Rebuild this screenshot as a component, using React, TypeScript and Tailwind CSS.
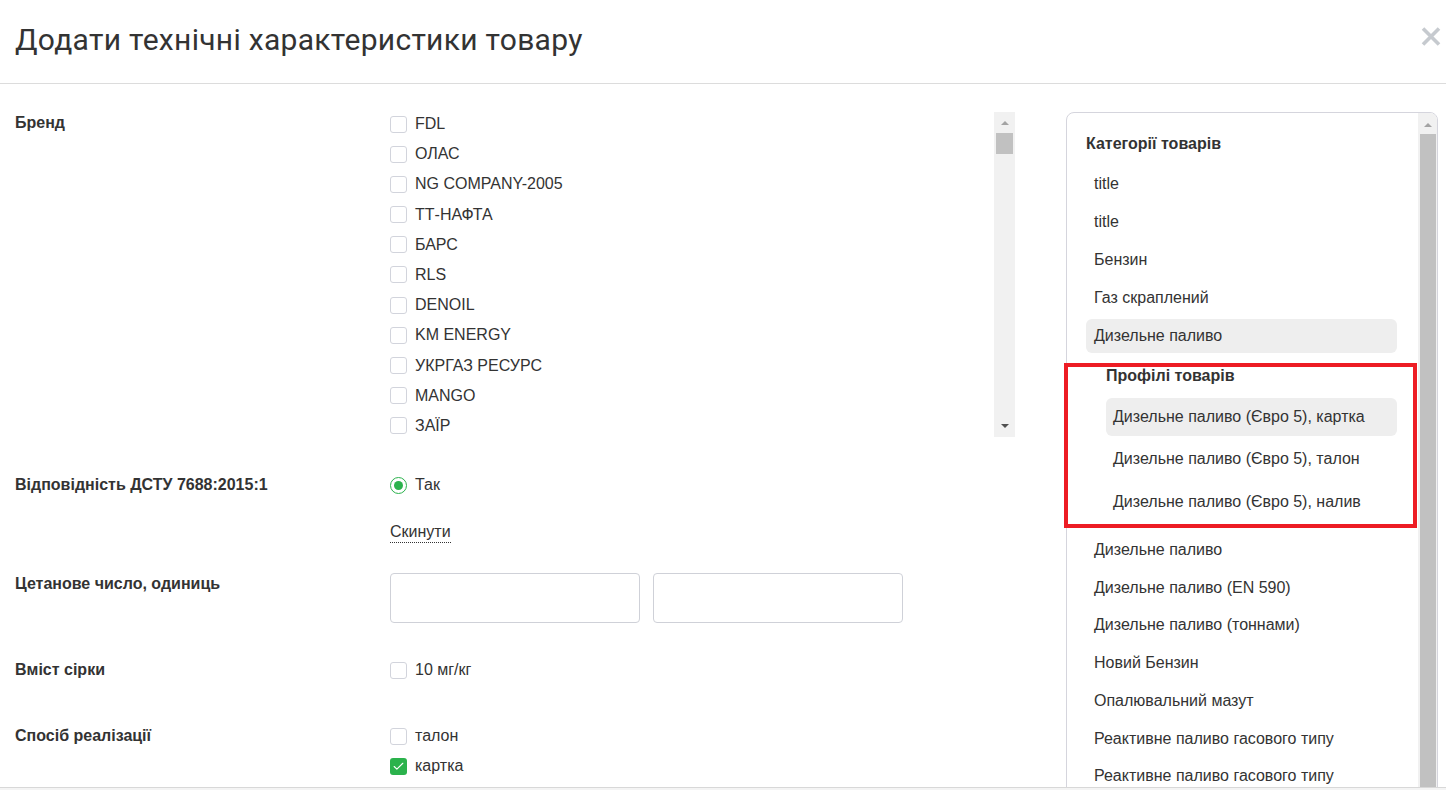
import { Check } from 'lucide-react'

const brands = ['FDL', 'ОЛАС', 'NG COMPANY-2005', 'ТТ-НАФТА', 'БАРС', 'RLS', 'DENOIL', 'KM ENERGY', 'УКРГАЗ РЕСУРС', 'MANGO', 'ЗАЇР']

const topCategories = ['title', 'title', 'Бензин', 'Газ скраплений']
const profiles = [
  'Дизельне паливо (Євро 5), картка',
  'Дизельне паливо (Євро 5), талон',
  'Дизельне паливо (Євро 5), налив',
]
const moreCategories = [
  'Дизельне паливо',
  'Дизельне паливо (EN 590)',
  'Дизельне паливо (тоннами)',
  'Новий Бензин',
  'Опалювальний мазут',
  'Реактивне паливо гасового типу',
  'Реактивне паливо гасового типу',
]

function Checkbox({ checked = false }: { checked?: boolean }) {
  if (checked) {
    return (
      <span className="flex h-[17px] w-[17px] shrink-0 items-center justify-center rounded-[3px] bg-[#2bb24c]">
        <Check className="h-[13px] w-[13px] text-white" strokeWidth={2} />
      </span>
    )
  }
  return <span className="h-[17px] w-[17px] shrink-0 rounded-[3px] border border-[#d2d4dc] bg-white" />
}

function CheckRow({ label, checked }: { label: string; checked?: boolean }) {
  return (
    <label className="flex h-[22px] items-center gap-[8px] text-[16px] text-[#333]">
      <Checkbox checked={checked} />
      <span>{label}</span>
    </label>
  )
}

function FieldLabel({ children }: { children: React.ReactNode }) {
  return <div className="w-[375px] shrink-0 text-[16px] font-bold leading-[22px] text-[#333]">{children}</div>
}

function CategoryItem({ label, active, indent }: { label: string; active?: boolean; indent?: boolean }) {
  return (
    <div
      className={`flex items-center rounded-[6px] text-[16px] text-[#333] ${
        indent ? 'h-[38px] px-[7px]' : 'h-[34px] px-[8px]'
      } ${active ? 'bg-[#eeeeee]' : ''}`}
    >
      {label}
    </div>
  )
}

export default function App() {
  return (
    <div className="relative h-[790px] w-full overflow-hidden bg-white font-['Liberation_Sans',Arial,sans-serif] text-[#333]">
      <header className="flex h-[84px] items-center justify-between border-b border-[#dcdcdc] pl-[15px] pr-[5px]">
        <h1 className="pb-[4px] font-['Roboto',sans-serif] text-[30px] font-normal tracking-[0.3px] text-[#333]">
          Додати технічні характеристики товару
        </h1>
        <button className="mb-[10px] text-[#c6cacf]" aria-label="Закрити">
          <svg width="20" height="19" viewBox="0 0 20 19">
            <path d="M2 1.5L18 17.5M18 1.5L2 17.5" stroke="currentColor" strokeWidth="3.6" />
          </svg>
        </button>
      </header>

      <div className="flex pt-[28px]">
        <div className="w-[1015px] shrink-0 pl-[15px]">
          {/* Бренд */}
          <div className="flex">
            <FieldLabel>Бренд</FieldLabel>
            <div className="-ml-[2px] flex h-[325px] flex-1 overflow-hidden">
              <div className="flex flex-1 flex-col gap-[8.2px] pl-[2px] pt-[1px]">
                {brands.map((b) => (
                  <CheckRow key={b} label={b} />
                ))}
              </div>
              <div className="flex w-[21px] flex-col items-center bg-[#f1f1f1]">
                <div className="mt-[9px] h-0 w-0 border-x-[4px] border-b-[4px] border-x-transparent border-b-[#a3a3a3]" />
                <div className="mt-[8px] h-[21px] w-[17px] bg-[#c1c1c1]" />
                <div className="flex-1" />
                <div className="mb-[9px] h-0 w-0 border-x-[4px] border-t-[4px] border-x-transparent border-t-[#505050]" />
              </div>
            </div>
          </div>

          {/* ДСТУ */}
          <div className="mt-[37px] flex">
            <FieldLabel>Відповідність ДСТУ 7688:2015:1</FieldLabel>
            <div className="flex flex-col">
              <label className="flex h-[22px] items-center gap-[8px] text-[16px]">
                <span className="flex h-[17px] w-[17px] items-center justify-center rounded-full border-[1.5px] border-[#2bb24c]">
                  <span className="h-[9px] w-[9px] rounded-full bg-[#2bb24c]" />
                </span>
                <span>Так</span>
              </label>
              <span className="mt-[25px] self-start border-b border-dotted border-[#333] text-[16px] leading-[21px]">
                Скинути
              </span>
            </div>
          </div>

          {/* Цетанове число */}
          <div className="mt-[30px] flex">
            <FieldLabel>Цетанове число, одиниць</FieldLabel>
            <div className="flex gap-[13px]">
              <input className="h-[50px] w-[250px] rounded-[4px] border border-[#cfd1d8] outline-none" />
              <input className="h-[50px] w-[250px] rounded-[4px] border border-[#cfd1d8] outline-none" />
            </div>
          </div>

          {/* Вміст сірки */}
          <div className="mt-[36px] flex">
            <FieldLabel>Вміст сірки</FieldLabel>
            <CheckRow label="10 мг/кг" />
          </div>

          {/* Спосіб реалізації */}
          <div className="mt-[44px] flex">
            <FieldLabel>Спосіб реалізації</FieldLabel>
            <div className="flex flex-col gap-[8px]">
              <CheckRow label="талон" />
              <CheckRow label="картка" checked />
              <div className="flex h-[22px] items-center">
                <Checkbox />
              </div>
            </div>
          </div>
        </div>

        {/* Категорії */}
        <div className="ml-[51px] flex h-[700px] w-[372px] shrink-0 overflow-hidden rounded-t-[8px] border border-[#d5d5dd]">
          <div className="flex-1 pl-[19px] pr-[21px] pt-[20px]">
            <div className="text-[16px] font-bold leading-[22px]">Категорії товарів</div>
            <div className="mt-[12px] flex flex-col gap-[4px]">
              {topCategories.map((c, i) => (
                <CategoryItem key={i} label={c} />
              ))}
              <CategoryItem label="Дизельне паливо" active />
            </div>
            <div className="mt-[12px] pl-[20px]">
              <div className="text-[16px] font-bold leading-[22px]">Профілі товарів</div>
              <div className="mt-[11px] flex flex-col gap-[4.3px]">
                {profiles.map((p, i) => (
                  <CategoryItem key={p} label={p} active={i === 0} indent />
                ))}
              </div>
            </div>
            <div className="mt-[12.5px] flex flex-col gap-[3.7px]">
              {moreCategories.map((c, i) => (
                <CategoryItem key={i} label={c} />
              ))}
            </div>
          </div>
          <div className="flex w-[19px] flex-col items-center bg-[#f1f1f1]">
            <div className="mt-[10px] h-0 w-0 border-x-[4px] border-b-[4px] border-x-transparent border-b-[#a3a3a3]" />
            <div className="mt-[7px] w-[16px] flex-1 bg-[#c1c1c1]" />
          </div>
        </div>
      </div>

      {/* annotation */}
      <div className="pointer-events-none absolute left-[1064px] top-[363px] h-[165px] w-[353px] border-[4px] border-[#ed1c24]" />

      <div className="absolute bottom-0 left-0 h-[3px] w-full border-t border-[#d8d8d8] bg-[#f4f4f4]" />
    </div>
  )
}
